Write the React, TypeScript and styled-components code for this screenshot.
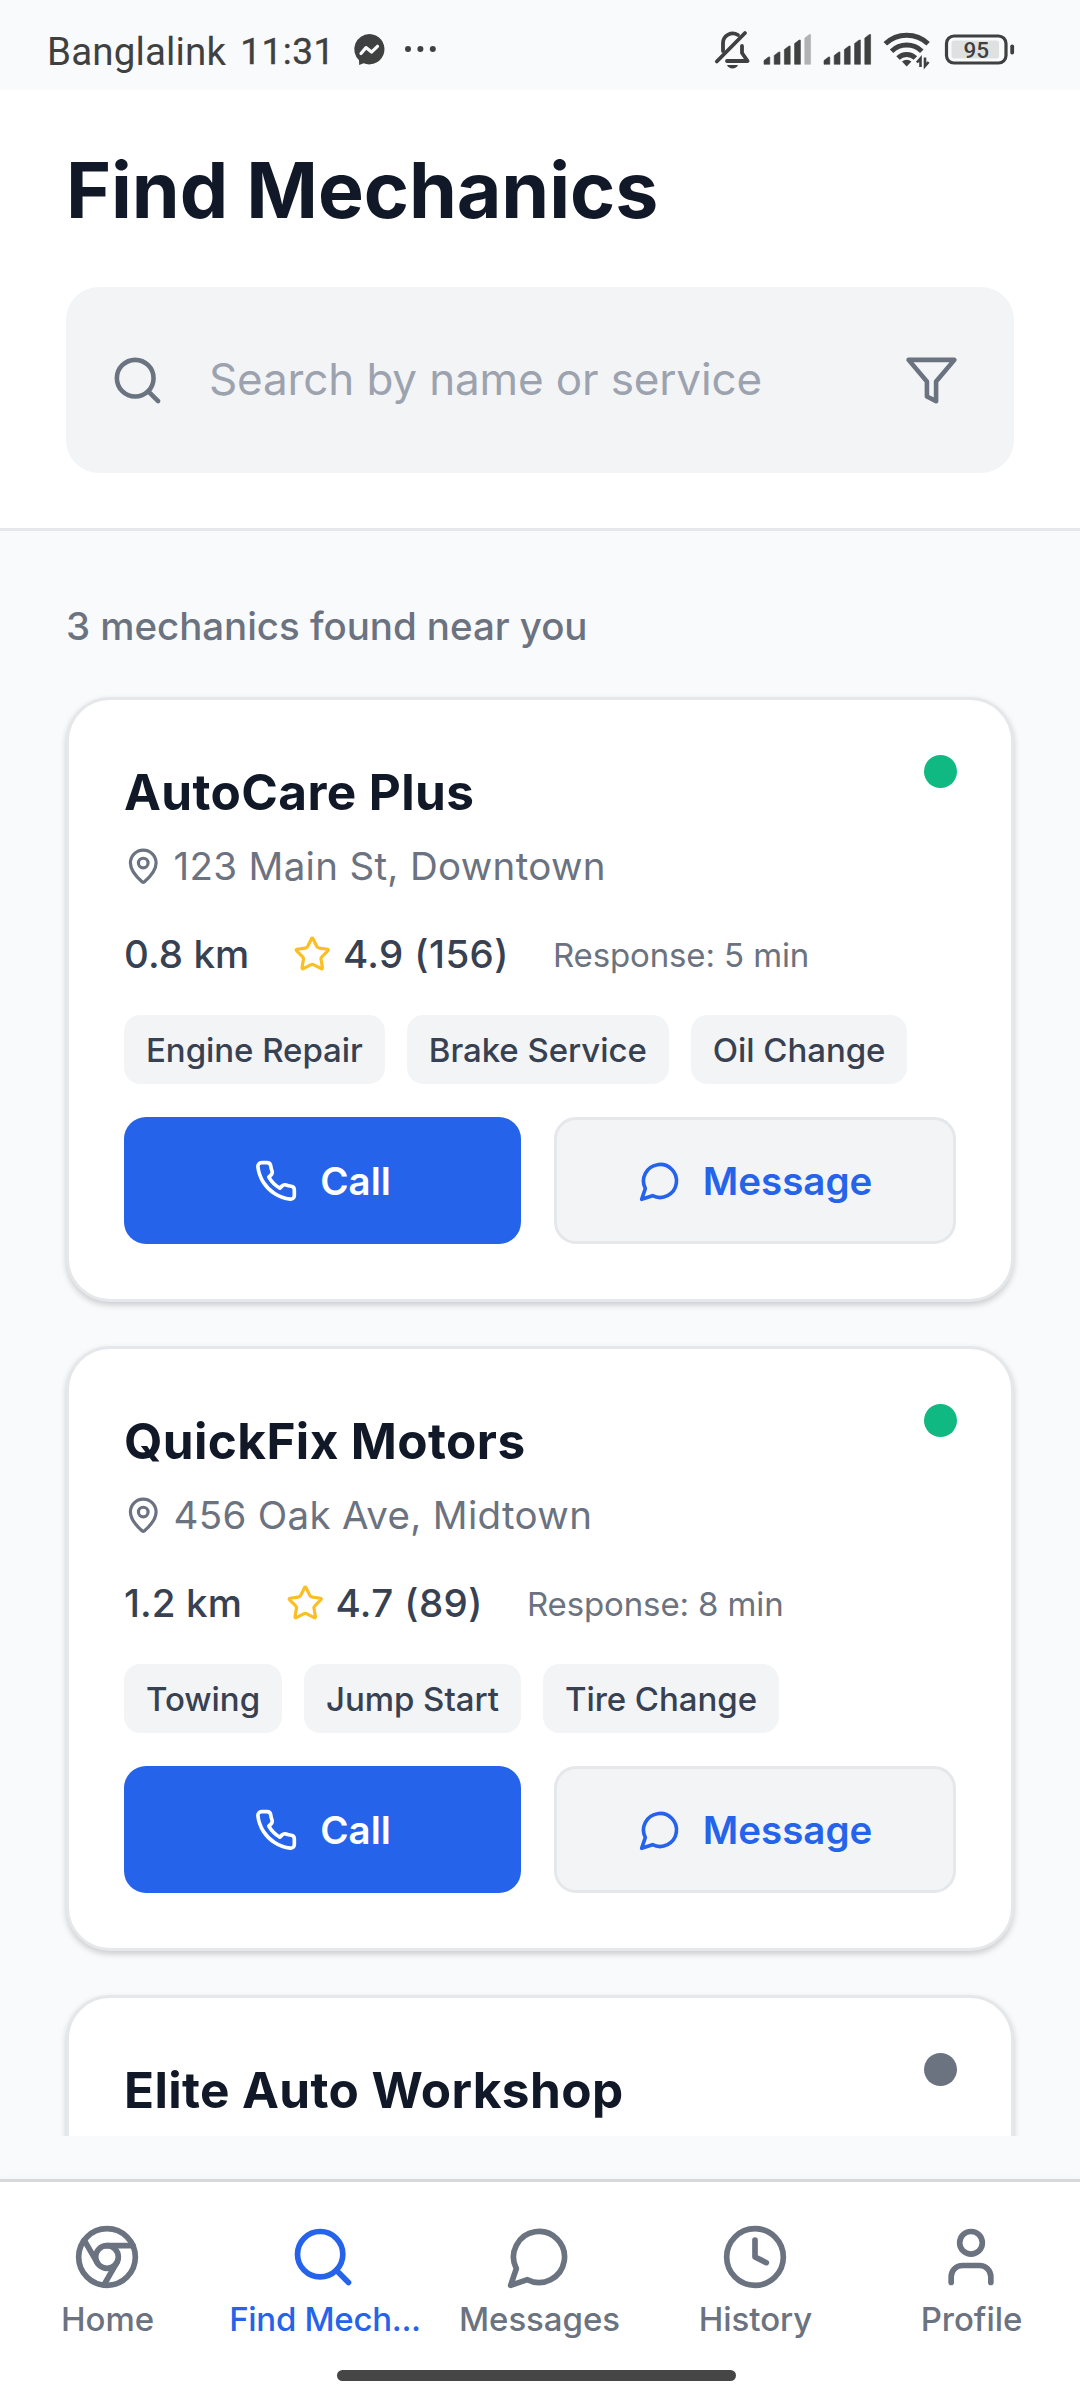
import React from "react";
import styled, { createGlobalStyle } from "styled-components";

const Global = createGlobalStyle`
  * { box-sizing: border-box; }
  body { margin: 0; background: #f9fafb; }
  button, input { font: inherit; }
`;

const Screen = styled.div`
  width: 1080px;
  height: 2400px;
  overflow: hidden;
  display: flex;
  flex-direction: column;
  background: #f9fafc;
  color: #111827;
  font-family: Inter, "Liberation Sans", sans-serif;
`;

const StatusBar = styled.div`
  height: 90px;
  flex: none;
  display: flex;
  align-items: center;
  justify-content: space-between;
  padding: 8px 65px 0 47px;
  font-family: Roboto, sans-serif;
  font-size: 38.5px;
  color: #3f4040;
`;

const StatusGroup = styled.div`
  display: flex;
  align-items: center;
`;

const Carrier = styled.span`
  padding-top: 5px;
  letter-spacing: 0.15px;
`;

const Time = styled.span`
  width: 89px;
  margin-left: 14px;
  padding-top: 4px;
  font-size: 37px;
  letter-spacing: 0.5px;
  -webkit-text-stroke: 0.4px currentColor;
  white-space: nowrap;
`;

const StatusSvg = styled.svg<{ $left?: number }>`
  display: block;
  overflow: visible;
  margin-left: ${(p) => p.$left ?? 0}px;
`;

const Header = styled.header`
  flex: none;
  height: 441px;
  padding: 54px 66px 0;
  background: #fff;
  border-bottom: 3px solid #e5e7eb;
`;

const Title = styled.h1`
  margin: 0 0 50px;
  font-size: 77px;
  line-height: 93px;
  font-weight: 700;
  letter-spacing: -0.1px;
`;

const SearchBox = styled.div`
  height: 186px;
  padding: 0 55px 0 44px;
  display: flex;
  align-items: center;
  border-radius: 33px;
  background: #f3f4f6;
  color: #6b7280;
`;

const SearchInput = styled.input`
  flex: 1;
  min-width: 0;
  margin-left: 44px;
  padding: 0 0 2px;
  border: 0;
  outline: 0;
  background: none;
  font-size: 44px;
  line-height: 54px;
  letter-spacing: -0.14px;
  &::placeholder { color: #9ca3af; opacity: 1; }
`;

const List = styled.main`
  flex: none;
  height: 1605px;
  overflow: hidden;
  padding: 72px 66px 0;
`;

const Count = styled.p`
  margin: 0 0 47px;
  font-size: 38.5px;
  line-height: 47px;
  font-weight: 500;
  letter-spacing: -0.05px;
  color: #6b7280;
`;

const Card = styled.article`
  height: 605px;
  margin-bottom: 44px;
  padding: 55px;
  border: 3px solid #e5e7eb;
  border-radius: 44px;
  background: #fff;
  box-shadow: 0 3px 6px rgba(0, 0, 0, 0.19);
`;

const CardTop = styled.div`
  display: flex;
  justify-content: space-between;
  align-items: flex-start;
`;

const Name = styled.h2`
  margin: 7px 0 0;
  font-size: 49.5px;
  line-height: 60px;
  font-weight: 700;
  letter-spacing: 0.38px;
`;

const Dot = styled.span<{ $online: boolean }>`
  width: 33px;
  height: 33px;
  margin-right: -1px;
  border-radius: 50%;
  background: ${(p) => (p.$online ? "#10b981" : "#6b7280")};
`;

const Address = styled.div`
  display: flex;
  align-items: center;
  gap: 11px;
  margin-top: 21px;
  font-size: 38.5px;
  line-height: 46px;
  letter-spacing: 0.32px;
  color: #6b7280;
`;

const Stats = styled.div`
  height: 47px;
  display: flex;
  align-items: center;
  gap: 44px;
  margin-top: 42px;
  font-size: 38.5px;
  line-height: 47px;
  font-weight: 500;
  letter-spacing: 0.1px;
  color: #374151;
`;

const Rating = styled.span`
  display: flex;
  align-items: center;
  gap: 11px;
  letter-spacing: 0.42px;
`;

const Response = styled.span`
  font-size: 33px;
  line-height: 46px;
  font-weight: 400;
  letter-spacing: -0.12px;
  color: #6b7280;
`;

const Tags = styled.div`
  display: flex;
  gap: 22px;
  margin: 37px 0 33px;
`;

const Tag = styled.span`
  height: 69px;
  padding: 0 22px;
  border-radius: 16.5px;
  background: #f3f4f6;
  font-size: 33px;
  line-height: 70px;
  font-weight: 500;
  letter-spacing: -0.05px;
  color: #374151;
`;

const Actions = styled.div`
  display: flex;
  gap: 33px;
`;

const Action = styled.button<{ $primary?: boolean }>`
  height: 127px;
  width: ${(p) => (p.$primary ? 397 : 402)}px;
  padding: 1px 0 0;
  display: flex;
  align-items: center;
  justify-content: center;
  gap: ${(p) => (p.$primary ? 22 : 21)}px;
  border-radius: 22px;
  border: ${(p) => (p.$primary ? "0" : "3px solid #e5e7eb")};
  background: ${(p) => (p.$primary ? "#2563eb" : "#f3f4f6")};
  color: ${(p) => (p.$primary ? "#fff" : "#2563eb")};
  font-size: 38.5px;
  line-height: 47px;
  font-weight: 600;
`;

const TabBar = styled.nav`
  position: relative;
  flex: none;
  height: 221px;
  margin-top: 43px;
  display: grid;
  grid-template-columns: repeat(5, 1fr);
  background: #fff;
  border-top: 3px solid #d8d8d8;
  box-shadow: 0 -1px 6px rgba(0, 0, 0, 0.03);
`;

const Tab = styled.a<{ $active?: boolean }>`
  display: flex;
  flex-direction: column;
  align-items: center;
  padding: 41px 2px 0 0;
  font-size: 33px;
  line-height: 40px;
  font-weight: 500;
  color: ${(p) => (p.$active ? "#2563eb" : "#6b7280")};
`;

const TabLabel = styled.span<{ $tight?: boolean }>`
  margin: 8px 0 0 ${(p) => (p.$tight ? 4 : 1)}px;
  letter-spacing: ${(p) => (p.$tight ? -0.3 : -0.05)}px;
  white-space: nowrap;
`;

const HomeIndicator = styled.div`
  position: absolute;
  left: 337px;
  bottom: 19px;
  width: 399px;
  height: 11px;
  border-radius: 6px;
  background: #464646;
`;

const Glyph = styled.svg`
  display: block;
  flex: none;
  fill: none;
  stroke: currentColor;
  stroke-width: 2;
  stroke-linecap: round;
  stroke-linejoin: round;
`;

const shapes = {
  search: (<><circle cx="11" cy="11" r="8" /><path d="m21 21-4.3-4.3" /></>),
  filter: <polygon points="22 3 2 3 10 12.46 10 19 14 21 14 12.46 22 3" />,
  pin: (<><path d="M20 10c0 4.993-5.539 10.193-7.399 11.799a1 1 0 0 1-1.202 0C9.539 20.193 4 14.993 4 10a8 8 0 0 1 16 0" /><circle cx="12" cy="10" r="3" /></>),
  star: <path d="M11.525 2.295a.53.53 0 0 1 .95 0l2.31 4.679a2.123 2.123 0 0 0 1.595 1.16l5.166.756a.53.53 0 0 1 .294.904l-3.736 3.638a2.123 2.123 0 0 0-.611 1.878l.882 5.14a.53.53 0 0 1-.771.56l-4.618-2.428a2.122 2.122 0 0 0-1.973 0L6.396 21.01a.53.53 0 0 1-.77-.56l.881-5.139a2.122 2.122 0 0 0-.611-1.879L2.16 9.795a.53.53 0 0 1 .294-.906l5.165-.755a2.122 2.122 0 0 0 1.597-1.16z" />,
  phone: <path d="M22 16.92v3a2 2 0 0 1-2.18 2 19.79 19.79 0 0 1-8.63-3.07 19.5 19.5 0 0 1-6-6 19.79 19.79 0 0 1-3.07-8.67A2 2 0 0 1 4.11 2h3a2 2 0 0 1 2 1.72 12.84 12.84 0 0 0 .7 2.81 2 2 0 0 1-.45 2.11L8.09 9.91a16 16 0 0 0 6 6l1.27-1.27a2 2 0 0 1 2.11-.45 12.84 12.84 0 0 0 2.81.7A2 2 0 0 1 22 16.92z" />,
  message: <path d="M7.9 20A9 9 0 1 0 4 16.1L2 22Z" />,
  chrome: (<><circle cx="12" cy="12" r="10" /><circle cx="12" cy="12" r="4" /><path d="M21.17 8H12M3.95 6.06 8.54 14M10.88 21.94 15.46 14" /></>),
  clock: (<><circle cx="12" cy="12" r="10" /><polyline points="12 6 12 12 16 14" /></>),
  user: (<><path d="M19 21v-2a4 4 0 0 0-4-4H9a4 4 0 0 0-4 4v2" /><circle cx="12" cy="7" r="4" /></>),
};

const Icon = ({ name, size, color }: { name: keyof typeof shapes; size: number; color?: string }) => (
  <Glyph width={size} height={size} viewBox="0 0 24 24" color={color}>{shapes[name]}</Glyph>
);

const barTops = [57, 52, 46, 40, 34.5];

const Signal = ({ weak, left }: { weak?: boolean; left: number }) => (
  <StatusSvg $left={left} width="48" height="40" viewBox="763.5 29 48 40">
    {barTops.map((top, i) => {
      const x = 763.5 + i * 10.2;
      const color = weak && i === 4 ? "#b1b2b2" : "#3f4040";
      return (
        <path
          key={top}
          d={`M${x} ${top + 3.5}L${x + 4.6} ${top}h1.2V64.3h-5.8z`}
          fill={color}
          stroke={color}
          strokeWidth="0.6"
          strokeLinejoin="round"
        />
      );
    })}
  </StatusSvg>
);

const mechanics = [
  { name: "AutoCare Plus", address: "123 Main St, Downtown", km: "0.8 km", rating: "4.9 (156)", min: 5, tags: ["Engine Repair", "Brake Service", "Oil Change"], online: true },
  { name: "QuickFix Motors", address: "456 Oak Ave, Midtown", km: "1.2 km", rating: "4.7 (89)", min: 8, tags: ["Towing", "Jump Start", "Tire Change"], online: true },
  { name: "Elite Auto Workshop", address: "", km: "", rating: "", min: 0, tags: [], online: false },
];

const tabs: { icon: keyof typeof shapes; label: string; active?: boolean }[] = [
  { icon: "chrome", label: "Home" },
  { icon: "search", label: "Find Mech...", active: true },
  { icon: "message", label: "Messages" },
  { icon: "clock", label: "History" },
  { icon: "user", label: "Profile" },
];

export default function App() {
  return (
    <Screen>
      <Global />
      <StatusBar>
        <StatusGroup>
          <Carrier>Banglalink</Carrier>
          <Time>11:31</Time>
          <StatusSvg $left={25} width="31" height="31" viewBox="0 0 31 31">
            <path d="M15.4 0A15.2 15.2 0 1 1 9.6 29.3L5.2 31 5 26.2A15.2 15.2 0 0 1 15.4 0z" fill="#3f4040" />
            <path d="M7 19.5 12 13.6l5.5 4.5 6-5.8" fill="none" stroke="#f9fafc" strokeWidth="3.2" strokeLinejoin="round" strokeLinecap="round" />
          </StatusSvg>
          <StatusSvg $left={20} width="32" height="6" viewBox="0 0 32 6">
            <g fill="#3f4040"><circle cx="3" cy="3" r="3" /><circle cx="15.4" cy="3" r="3" /><circle cx="27.8" cy="3" r="3" /></g>
          </StatusSvg>
        </StatusGroup>
        <StatusGroup>
          <StatusSvg width="35" height="38" viewBox="715 30 35 38">
            <g fill="none" stroke="#3f4040" strokeWidth="3.8" strokeLinecap="round" strokeLinejoin="round">
              <path d="M723 51V43a9.7 9.7 0 0 1 15-8" />
              <path d="M742 46V53L747.6 61H727" />
              <path d="M716.8 61.5 745 33" />
            </g>
            <path d="M727 65h11c-.8 2.2-3 3.4-5.5 3.4s-4.7-1.2-5.5-3.4z" fill="#3f4040" />
          </StatusSvg>
          <Signal weak left={13.5} />
          <Signal left={12} />
          <StatusSvg $left={12.5} width="46" height="36" viewBox="884 31 46 36">
            <g fill="none" stroke="#3f4040" strokeWidth="5">
              <path d="M885.3 43.8a31 31 0 0 1 42.8 0" />
              <path d="M891.6 51.2a21.5 21.5 0 0 1 30.2 0" />
              <path d="M898 58a12.5 12.5 0 0 1 17.4 0" />
            </g>
            <path d="M902 61.5a7 7 0 0 1 9.4 0L906.7 66.5z" fill="#3f4040" />
            <path d="M920.5 67V58.5l-3.6 4M925 57.5v8.500l3.600-4" fill="none" stroke="#3f4040" strokeWidth="2.600" />
          </StatusSvg>
          <StatusSvg $left={15} width="70" height="31" viewBox="945 33.5 70 31">
            <rect x="946.5" y="35.5" width="59.5" height="27" rx="7.5" fill="none" stroke="#3f4040" strokeWidth="3.2" />
            <rect x="951.5" y="40" width="47.5" height="18" rx="2.5" fill="#dfe1e1" />
            <rect x="1010.3" y="44" width="3.8" height="10" rx="1.8" fill="#3f4040" />
            <text x="976.2" y="57.4" textAnchor="middle" fontFamily="Roboto" fontSize="22.5" fontWeight="500" fill="#3f4040">95</text>
          </StatusSvg>
        </StatusGroup>
      </StatusBar>

      <Header>
        <Title>Find Mechanics</Title>
        <SearchBox>
          <Icon name="search" size={55} />
          <SearchInput placeholder="Search by name or service" />
          <Icon name="filter" size={55} />
        </SearchBox>
      </Header>

      <List>
        <Count>3 mechanics found near you</Count>
        {mechanics.map((m) => (
          <Card key={m.name}>
            <CardTop>
              <Name>{m.name}</Name>
              <Dot $online={m.online} />
            </CardTop>
            {m.address && (
              <>
                <Address>
                  <Icon name="pin" size={38.5} />
                  {m.address}
                </Address>
                <Stats>
                  <span>{m.km}</span>
                  <Rating>
                    <Icon name="star" size={38.5} color="#fbbf24" />
                    {m.rating}
                  </Rating>
                  <Response>Response: {m.min} min</Response>
                </Stats>
                <Tags>{m.tags.map((t) => <Tag key={t}>{t}</Tag>)}</Tags>
                <Actions>
                  <Action $primary><Icon name="phone" size={44} />Call</Action>
                  <Action><Icon name="message" size={44} />Message</Action>
                </Actions>
              </>
            )}
          </Card>
        ))}
      </List>

      <TabBar>
        {tabs.map((t) => (
          <Tab key={t.label} $active={t.active}>
            <Icon name={t.icon} size={68} />
            <TabLabel $tight={t.active}>{t.label}</TabLabel>
          </Tab>
        ))}
        <HomeIndicator />
      </TabBar>
    </Screen>
  );
}
